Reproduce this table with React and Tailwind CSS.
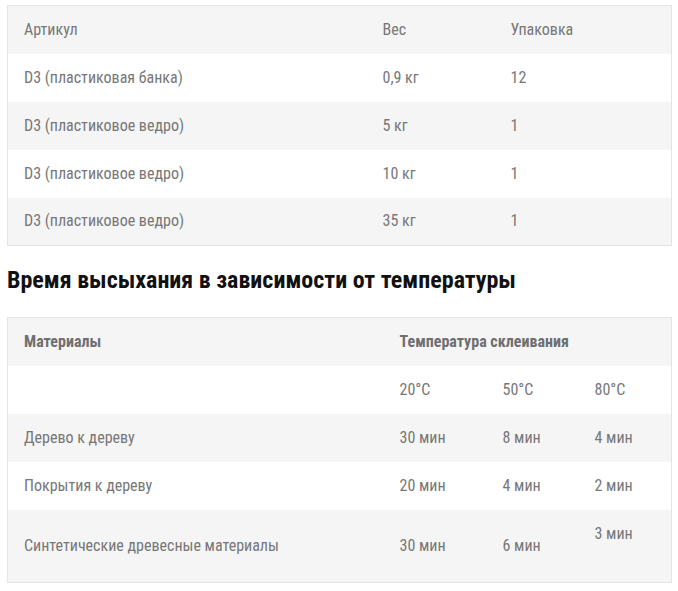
const packs = [
  { name: "D3 (пластиковая банка)", weight: "0,9 кг", qty: "12" },
  { name: "D3 (пластиковое ведро)", weight: "5 кг", qty: "1" },
  { name: "D3 (пластиковое ведро)", weight: "10 кг", qty: "1" },
  { name: "D3 (пластиковое ведро)", weight: "35 кг", qty: "1" }];

const drying = [
  { mat: "Дерево к дереву", t20: "30 мин", t50: "8 мин", t80: "4 мин" },
  { mat: "Покрытия к дереву", t20: "20 мин", t50: "4 мин", t80: "2 мин" }];

const font = "font-['Roboto_Condensed','Liberation_Sans_Narrow','DejaVu_Sans_Condensed',Roboto,sans-serif]";

export default function App() {
  return (
    <div className={`bg-white px-[7px] pt-[5px] text-[16px] text-[#777] ${font}`}>
      <table className="w-[665px] border-collapse border border-[#e4e4e4] table-fixed">
        <colgroup>
          <col className="w-[359px]" />
          <col className="w-[128px]" />
          <col />
        </colgroup>
        <tbody>
          <tr className="bg-[#f5f5f5] h-[48px]">
            <td className="px-4 leading-6">Артикул</td>
            <td className="px-4 leading-6">Вес</td>
            <td className="px-4 leading-6">Упаковка</td>
          </tr>
          {packs.map((p, i) =>
          <tr key={i} className={`h-[48px] ${i % 2 ? "bg-[#f5f5f5]" : "bg-white"}`}>
              <td className="px-4 leading-6">{p.name}</td>
              <td className="px-4 leading-6">{p.weight}</td>
              <td className="px-4 leading-6">{p.qty}</td>
            </tr>
          )}
        </tbody>
      </table>

      <h2 className="mt-[18px] mb-[21px] text-[24px] leading-[32px] font-bold text-[#111]">
        Время высыхания в зависимости от температуры
      </h2>

      <table className="w-[665px] border-collapse border border-[#e4e4e4] table-fixed">
        <colgroup>
          <col className="w-[376px]" />
          <col className="w-[103px]" />
          <col className="w-[92px]" />
          <col />
        </colgroup>
        <tbody>
          <tr className="bg-[#f5f5f5] h-[48px] font-bold text-[#6f6f6f]">
            <td className="px-4 leading-6">Материалы</td>
            <td colSpan={3} className="px-4 leading-6">Температура склеивания</td>
          </tr>
          <tr className="bg-white h-[48px]">
            <td className="px-4 leading-6"></td>
            <td className="px-4 leading-6">20°C</td>
            <td className="px-4 leading-6">50°C</td>
            <td className="px-4 leading-6">80°C</td>
          </tr>
          {drying.map((r, i) =>
          <tr key={i} className={`h-[48px] ${i % 2 ? "bg-white" : "bg-[#f5f5f5]"}`}>
              <td className="px-4 leading-6">{r.mat}</td>
              <td className="px-4 leading-6">{r.t20}</td>
              <td className="px-4 leading-6">{r.t50}</td>
              <td className="px-4 leading-6">{r.t80}</td>
            </tr>
          )}
          <tr className="bg-[#f5f5f5] h-[73px]">
            <td className="px-4 leading-6">Синтетические древесные материалы</td>
            <td className="px-4 leading-6">30 мин</td>
            <td className="px-4 leading-6">6 мин</td>
            <td className="px-4 leading-6">3 мин<br />&nbsp;</td>
          </tr>
        </tbody>
      </table>
    </div>);

}
